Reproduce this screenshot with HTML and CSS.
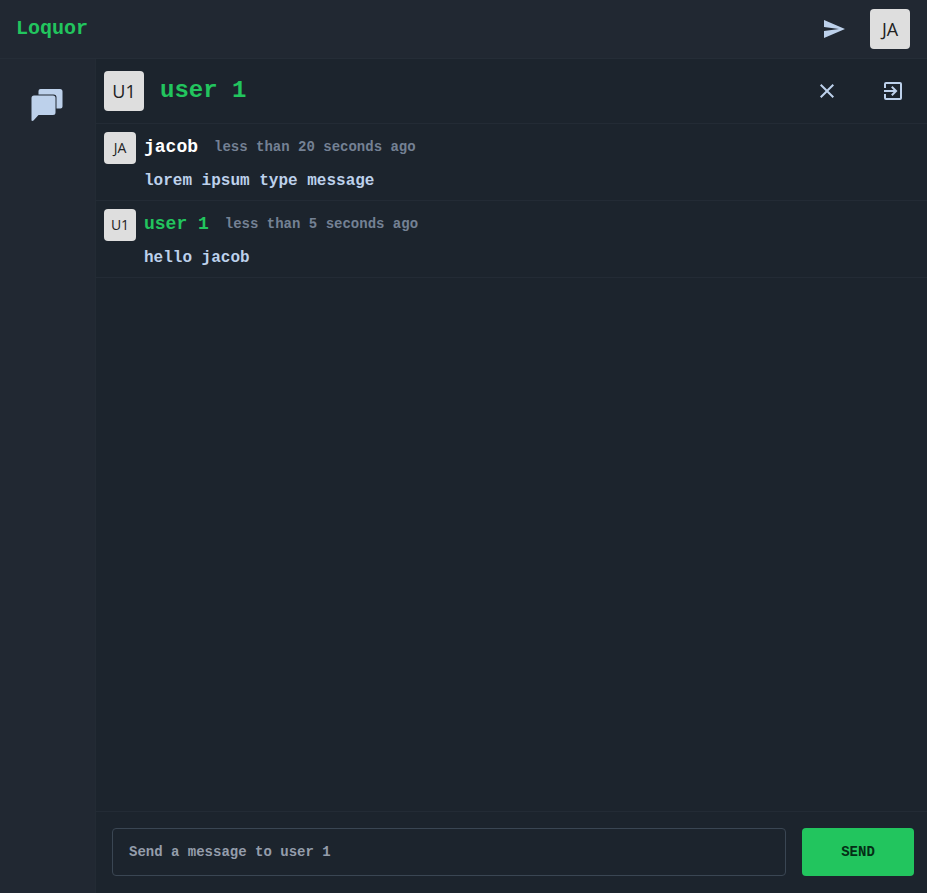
FILE: index.html
```html
<!DOCTYPE html>
<html lang="en">
<head>
<meta charset="utf-8">
<meta name="viewport" content="width=device-width, initial-scale=1">
<title>Loquor</title>
<link rel="stylesheet" href="styles.css">
</head>
<body>
<div class="app">
  <header class="topbar">
    <a class="brand" href="#">Loquor</a>
    <button class="icon-button" type="button" aria-label="Direct messages">
      <svg width="24" height="24" viewBox="0 0 24 24" fill="currentColor"><path d="M2.01 21 23 12 2.01 3 2 10l15 2-15 2z"/></svg>
    </button>
    <button class="avatar" type="button">JA</button>
  </header>
  <div class="body">
    <nav class="sidebar">
      <a class="rooms" href="#" aria-label="Rooms">
        <svg width="32" height="34" viewBox="0 0 32 34" fill="currentColor"><path d="M9.500 1h19.500a2.500 2.500 0 0 1 2.500 2.500v15a2 2 0 0 1-2 2h-4V9.500a3 3 0 0 0-3-3H7.500V3a2 2 0 0 1 2-2z"/><path d="M3 7.500h19a2.500 2.500 0 0 1 2.500 2.500v14.500a2.500 2.500 0 0 1-2.500 2.500H7.500L2.500 32.500Q.5 33.500.5 32V10A2.500 2.500 0 0 1 3 7.500z"/></svg>
      </a>
    </nav>
    <main class="chat">
      <div class="chat-header">
        <span class="avatar">U1</span>
        <h1 class="chat-title">user 1</h1>
        <button class="icon-button" type="button" aria-label="Close">
          <svg width="24" height="24" viewBox="0 0 24 24" fill="currentColor"><path d="M19 6.410 17.590 5 12 10.590 6.410 5 5 6.410 10.590 12 5 17.590 6.410 19 12 13.410 17.590 19 19 17.590 13.410 12z"/></svg>
        </button>
        <button class="icon-button" type="button" aria-label="Leave chat">
          <svg width="24" height="24" viewBox="0 0 24 24" fill="currentColor"><path d="M10.090 15.590 11.500 17l5-5-5-5-1.410 1.410L12.670 11H3v2h9.670zM19 3H5a2 2 0 0 0-2 2v4h2V5h14v14H5v-4H3v4a2 2 0 0 0 2 2h14a2 2 0 0 0 2-2V5a2 2 0 0 0-2-2z"/></svg>
        </button>
      </div>
      <div class="messages">
        <article class="message">
          <span class="avatar avatar-small">JA</span>
          <div class="message-body">
            <div class="meta"><span class="author own">jacob</span><time class="time">less than 20 seconds ago</time></div>
            <p class="text">lorem ipsum type message</p>
          </div>
        </article>
        <article class="message">
          <span class="avatar avatar-small">U1</span>
          <div class="message-body">
            <div class="meta"><span class="author">user 1</span><time class="time">less than 5 seconds ago</time></div>
            <p class="text">hello jacob</p>
          </div>
        </article>
      </div>
      <form class="composer">
        <input class="field" type="text" aria-label="Message" placeholder="Send a message to user 1">
        <button class="send" type="button">SEND</button>
      </form>
    </main>
  </div>
</div>
</body>
</html>
```
FILE: styles.css
```css
* {
  box-sizing: border-box;
}

body {
  margin: 0;
  background: #1c242d;
  color: #bdd1eb;
  font-family: "Liberation Mono", monospace;
}

button {
  font: inherit;
  border: 0;
  padding: 0;
  cursor: pointer;
}

svg {
  display: block;
}

.app {
  display: flex;
  flex-direction: column;
  height: 100vh;
}

.topbar {
  display: flex;
  align-items: center;
  gap: 16px;
  padding: 9px 17px 9px 16px;
  background: #212832;
  border-bottom: 1px solid #252d37;
}

.brand {
  margin-right: auto;
  color: #22c55e;
  font-size: 20px;
  font-weight: 700;
  line-height: 26px;
  text-decoration: none;
}

.icon-button {
  display: grid;
  place-items: center;
  width: 40px;
  height: 40px;
  background: none;
  color: inherit;
}

.avatar {
  display: grid;
  place-items: center;
  flex: none;
  width: 40px;
  height: 40px;
  padding-bottom: 1px;
  border-radius: 4px;
  background: #dedede;
  color: #222;
  font-family: "Open Sans", "Noto Sans", sans-serif;
  font-size: 18px;
  font-weight: 400;
  line-height: 24px;
}

.avatar-small {
  width: 32px;
  height: 32px;
  font-size: 14px;
}

.body {
  display: flex;
  flex: 1;
  min-height: 0;
}

.sidebar {
  flex: none;
  width: 96px;
  padding: 29px 0 0 31px;
  background: #212832;
  border-right: 1px solid #232b34;
}

.rooms {
  color: inherit;
}

.chat {
  display: flex;
  flex: 1;
  flex-direction: column;
  min-width: 0;
}

.chat-header {
  display: flex;
  align-items: center;
  gap: 16px;
  padding: 12px 14px 12px 8px;
  border-bottom: 1px solid #232b35;
}

.chat-title {
  flex: 1;
  margin: 0;
  color: #22c55e;
  font-size: 24px;
  font-weight: 700;
  line-height: 34px;
}

.chat-header .icon-button + .icon-button {
  margin-left: 10px;
}

.messages {
  flex: 1;
  overflow: auto;
}

.message {
  display: flex;
  gap: 8px;
  padding: 8px;
  border-bottom: 1px solid #232b35;
}

.meta {
  display: flex;
  align-items: center;
  gap: 16px;
  height: 30px;
}

.author {
  color: #22c55e;
  font-size: 18px;
  font-weight: 700;
}

.own {
  color: #fff;
}

.time {
  color: #748194;
  font-size: 14px;
  font-weight: 700;
}

.text {
  margin: 6px 0 0;
  font-size: 16px;
  font-weight: 700;
  line-height: 26px;
}

.message {
  padding-bottom: 6px;
}

.composer {
  display: flex;
  gap: 16px;
  padding: 16px 13px 17px 16px;
  border-top: 1px solid #232b35;
}

.field {
  flex: 1;
  min-width: 0;
  height: 48px;
  padding: 0 16px;
  border: 1px solid #3a4653;
  border-radius: 4px;
  background: transparent;
  color: #bdd1eb;
  font: 700 14px "Liberation Mono", monospace;
}

.field::placeholder {
  color: #949dab;
  opacity: 1;
}

.send {
  width: 112px;
  height: 48px;
  border-radius: 4px;
  background: #22c55e;
  color: #052e16;
  font-size: 14px;
  font-weight: 700;
}
```
